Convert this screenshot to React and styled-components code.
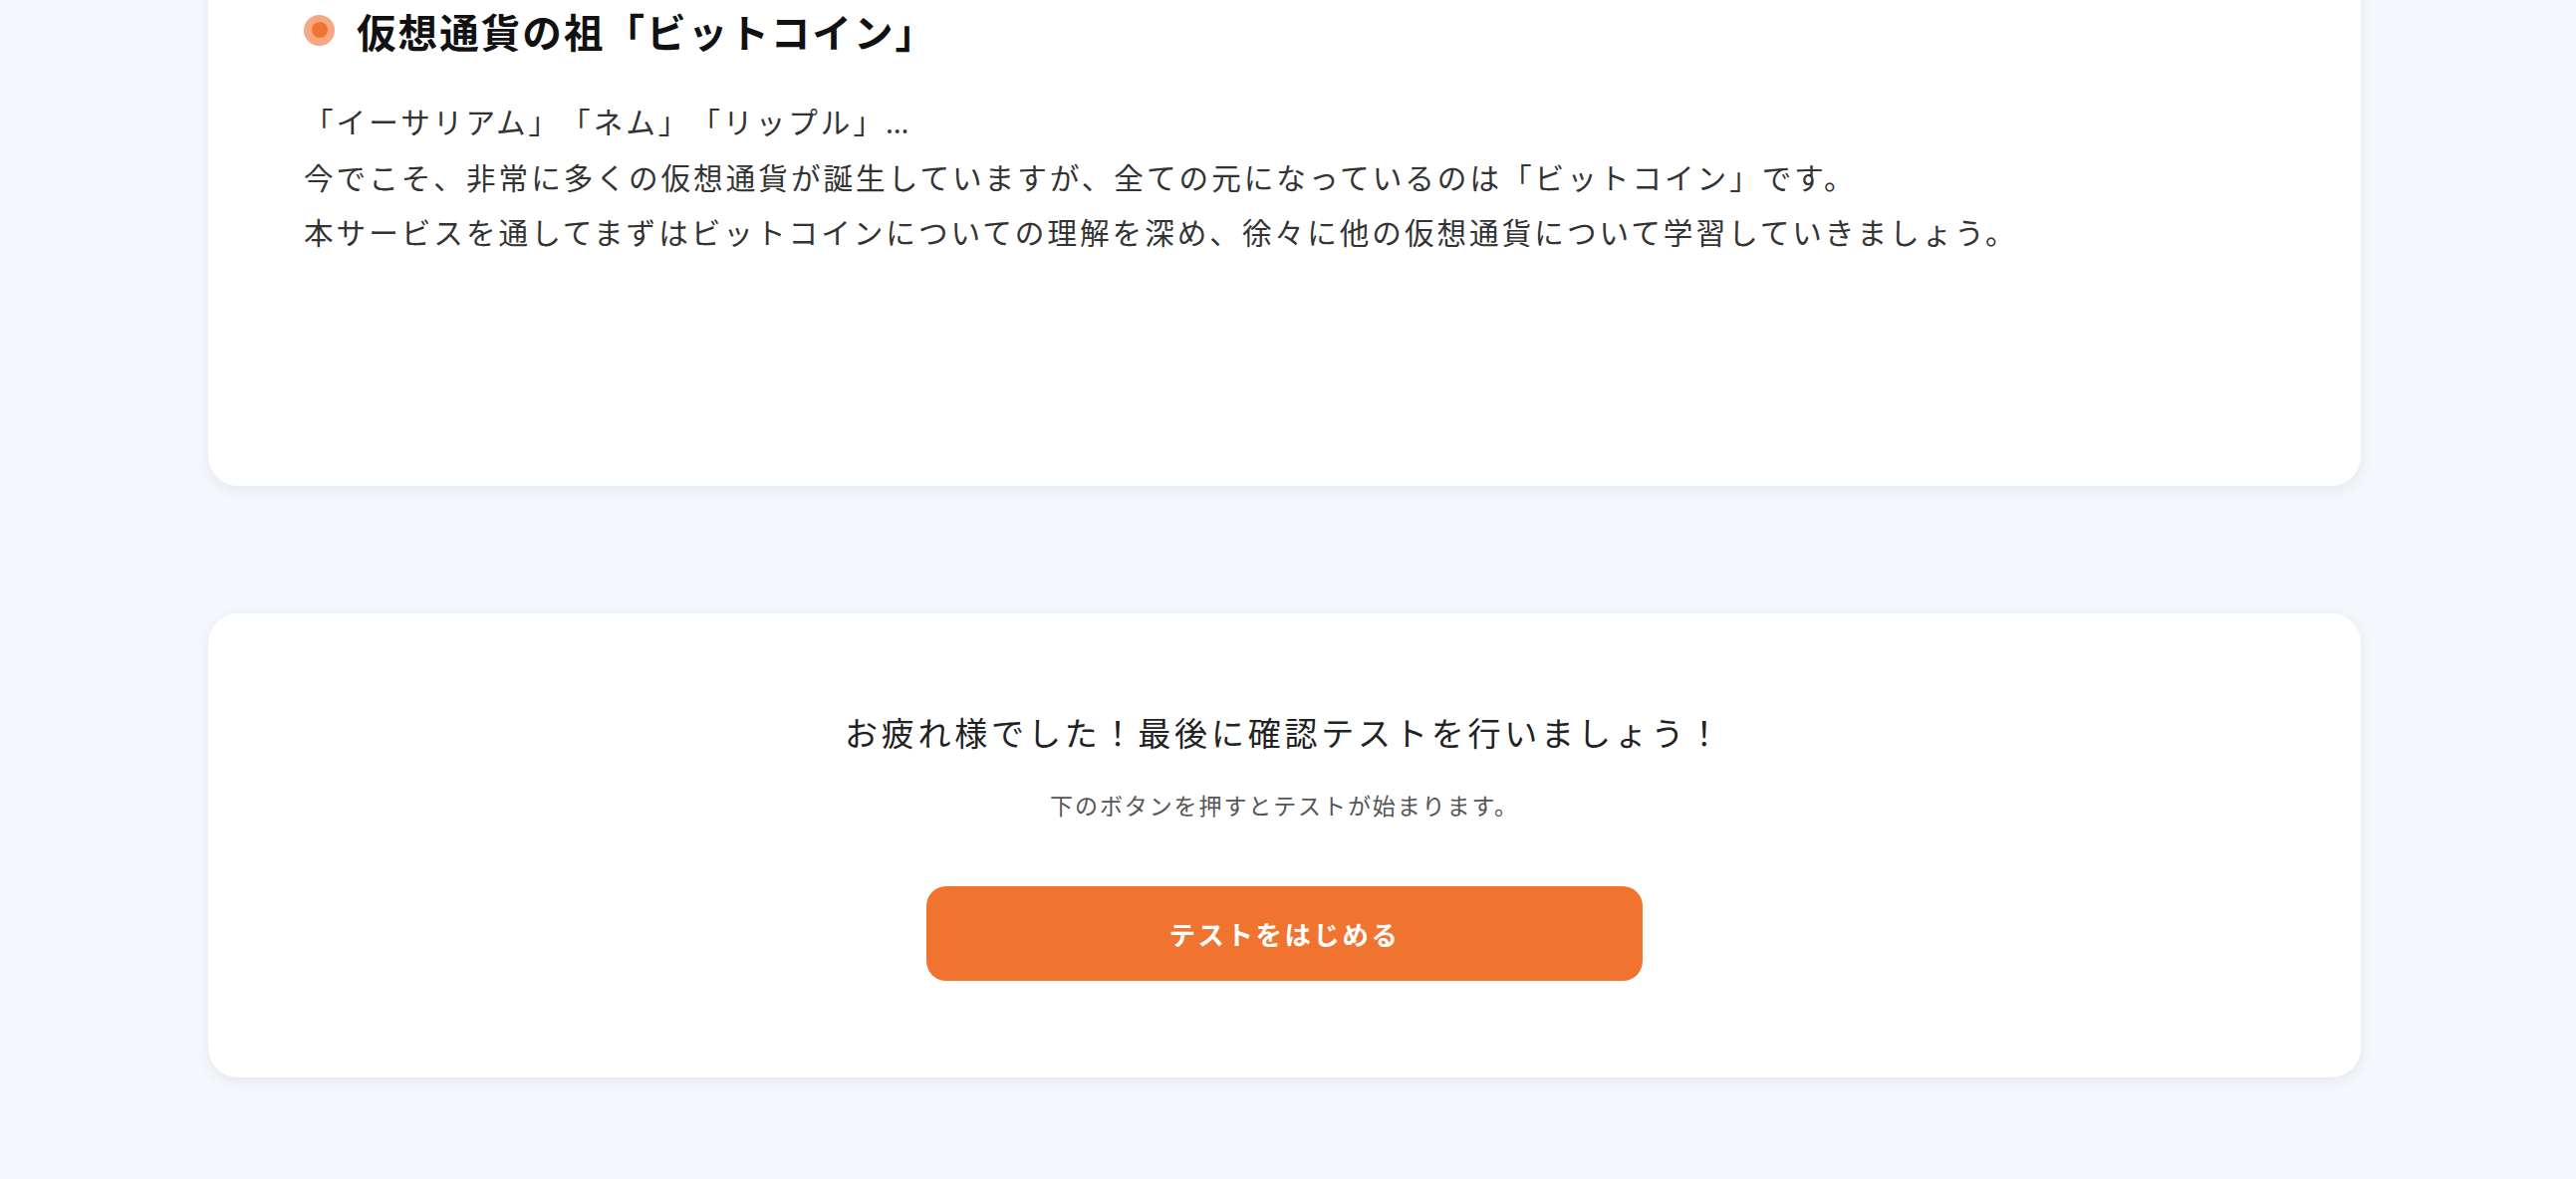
import React from "react";
import styled, { createGlobalStyle } from "styled-components";

const GlobalStyle = createGlobalStyle`
    body {
        margin: 0;
        background-color: #f4f7fb;
        font-family: "Noto Sans CJK JP", "Noto Sans", sans-serif;
        color: #333;
        text-spacing-trim: space-all;
    }
`;

const Page = styled.main`
    display: flex;
    flex-direction: column;
    align-items: center;
    gap: 128px;
    padding: 0 7px 102px 0;
`;

const Card = styled.section`
    width: 2161px;
    box-sizing: border-box;
    background-color: #fff;
    border-radius: 30px;
    box-shadow: 0 4px 14px rgba(30, 50, 90, 0.07);
`;

// first card is scrolled partly out of view
const ArticleCard = styled(Card)`
    margin-top: -64px;
    padding: 64px 96px 228px;
`;

const FinishCard = styled(Card)`
    padding: 94px 0 97px;
    display: flex;
    flex-direction: column;
    align-items: center;
`;

const Heading = styled.h2`
    display: flex;
    align-items: center;
    gap: 22px;
    margin: 0;
    height: 60px;
    font-size: 39.6px;
    font-weight: 700;
    letter-spacing: 2px;
    color: #111;
`;

const Dot = styled.span`
    width: 31px;
    height: 31px;
    border-radius: 50%;
    background-color: #f7a883;
    display: flex;
    justify-content: center;
    align-items: center;
    flex-shrink: 0;

    &::after {
        content: "";
        width: 16px;
        height: 16px;
        border-radius: 50%;
        background-color: #f07430;
    }
`;

const Body = styled.p`
    margin: 34px 0 0;
    font-size: 29.6px;
    line-height: 55px;
    letter-spacing: 3px;
    color: #333;
`;

const Ellipsis = styled.span`
    font-family: "Noto Sans", sans-serif;
    letter-spacing: 2px;
`;

const FinishTitle = styled.h3`
    margin: 0;
    font-size: 33px;
    font-weight: 400;
    line-height: 50px;
    letter-spacing: 3.8px;
    color: #222;
`;

const FinishNote = styled.p`
    margin: 31px 0 0;
    font-size: 23px;
    line-height: 34px;
    letter-spacing: 1.9px;
    color: #555;
`;

const StartButton = styled.button`
    margin-top: 65px;
    width: 719px;
    height: 95px;
    border: none;
    border-radius: 20px;
    background-color: #f07430;
    color: #fff;
    font-family: inherit;
    font-size: 26.4px;
    font-weight: 700;
    letter-spacing: 2.6px;
    cursor: pointer;

    &:hover {
        opacity: 0.9;
    }
`;

export default function App() {
    return (
        <>
            <GlobalStyle />
            <Page>
                <ArticleCard>
                    <Heading><Dot />仮想通貨の祖「ビットコイン」</Heading>
                    <Body>
                        「イーサリアム」「ネム」「リップル」<Ellipsis>…</Ellipsis><br />
                        今でこそ、非常に多くの仮想通貨が誕生していますが、全ての元になっているのは「ビットコイン」です。<br />
                        本サービスを通してまずはビットコインについての理解を深め、徐々に他の仮想通貨について学習していきましょう。
                    </Body>
                </ArticleCard>
                <FinishCard>
                    <FinishTitle>お疲れ様でした！最後に確認テストを行いましょう！</FinishTitle>
                    <FinishNote>下のボタンを押すとテストが始まります。</FinishNote>
                    <StartButton>テストをはじめる</StartButton>
                </FinishCard>
            </Page>
        </>
    );
}
